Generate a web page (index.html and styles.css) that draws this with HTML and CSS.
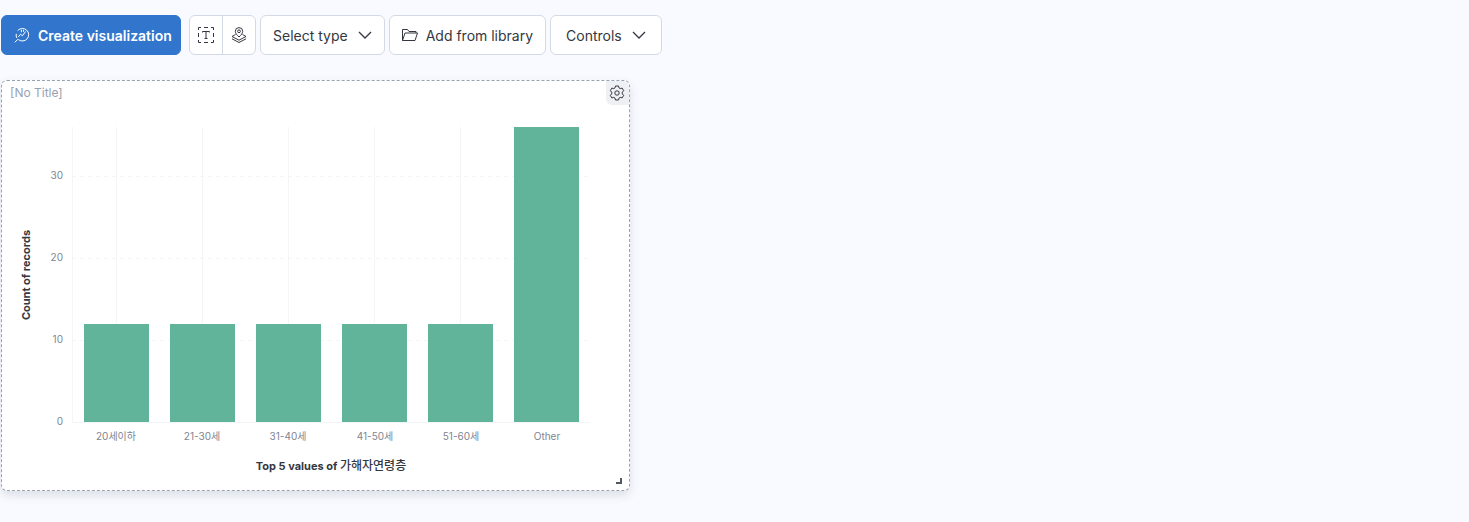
FILE: index.html
```html
<!DOCTYPE html>
<html lang="en">
<head>
  <meta charset="UTF-8" />
  <title>Dashboard editor</title>
  <link rel="stylesheet" href="styles.css">
</head>
<body>
<div class="toolbar">
  <button class="btn btn-primary">
    <svg class="icon" viewBox="0 0 16 16" fill="none" stroke="currentColor" stroke-width="1" stroke-linecap="round" stroke-linejoin="round">
      <path d="M4 3.2A6.3 6.3 0 1 1 4.6 12.8"/>
      <path d="M1 15l2.6-2.4"/>
      <path d="M2.2 7.2A5 5 0 0 0 2.6 10.6"/>
      <path d="M4.6 9.6l2-2.4 1.8 1.6 3-4"/>
      <path d="M7.4 3.2v1.6M9.6 3.2v1.2"/>
    </svg>
    Create visualization
  </button>
  <div class="btn-group">
    <button class="btn-square">
      <svg class="icon" viewBox="0 0 16 16" fill="none" stroke="currentColor" stroke-width="1">
        <path d="M.5 3V.5H3M6 .5h4M13 .5h2.500V3M15.500 6v4M15.500 13v2.500H13M10 15.500H6M3 15.500H.5V13M.5 10V6"/>
        <path d="M4.500 5.500V4.500h7v1M8 4.500v7M6.500 11.500h3"/>
      </svg>
    </button>
    <button class="btn-square">
      <svg class="icon" viewBox="0 0 16 16" fill="none" stroke="currentColor" stroke-width="1" stroke-linejoin="round">
        <path d="M8 10C6 8 4.300 6.400 4.300 4.300a3.700 3.700 0 0 1 7.400 0C11.700 6.400 10 8 8 10z"/>
        <circle cx="8" cy="4.300" r="1.400"/>
        <path d="M4.500 7.500L1 9.500l7 3.700 7-3.700-3.500-2"/>
        <path d="M1 11.800l7 3.700 7-3.700"/>
      </svg>
    </button>
  </div>
  <button class="btn">
    Select type
    <svg class="chevron" viewBox="0 0 14 8" fill="none" stroke="currentColor" stroke-width="1.300"><path d="M1 1l6 6 6-6"/></svg>
  </button>
  <button class="btn">
    <svg class="icon" viewBox="0 0 16 16" fill="none" stroke="currentColor" stroke-width="1" stroke-linejoin="round">
      <path d="M.5 13.500V2.500h5l1.500 2h7v1.500"/>
      <path d="M.5 13.500h12.500l2.500-7.500H3z"/>
    </svg>
    Add from library
  </button>
  <button class="btn btn-controls">
    Controls
    <svg class="chevron" viewBox="0 0 14 8" fill="none" stroke="currentColor" stroke-width="1.300"><path d="M1 1l6 6 6-6"/></svg>
  </button>
</div>

<div class="panel">
  <div class="panel-title">[No Title]</div>
  <div class="panel-gear">
    <svg viewBox="0 0 16 16" fill="none" stroke="currentColor" stroke-width="1" stroke-linejoin="round">
      <path d="M6.500 1h3l.5 1.900 1.300.7 1.900-.5 1.500 2.600-1.400 1.400v1.800l1.400 1.400-1.500 2.600-1.900-.5-1.300.7-.5 1.900h-3L6 13.100l-1.300-.7-1.900.5-1.500-2.600 1.400-1.400V7.100L1.300 5.700l1.500-2.600 1.900.5L6 2.900z"/>
      <circle cx="8" cy="8" r="2.200"/>
    </svg>
  </div>
  <svg class="chart" viewBox="2 105 627 384">
    <g class="grid">
      <path d="M72.500 127V422M116.500 127V422M202.500 127V422M288.500 127V422M374.500 127V422M460.500 127V422"/>
      <path class="grid-dash" d="M72 176.500H590M72 258.500H590M72 340.500H590"/>
      <path d="M72 422.500H590"/>
    </g>
    <g class="bars">
      <rect x="84" y="324" width="65" height="98"/>
      <rect x="170" y="324" width="65" height="98"/>
      <rect x="256" y="324" width="65" height="98"/>
      <rect x="342" y="324" width="65" height="98"/>
      <rect x="428" y="324" width="65" height="98"/>
      <rect x="514" y="127" width="65" height="295"/>
    </g>
    <g class="tick tick-y">
      <text x="63" y="425">0</text>
      <text x="63" y="343">10</text>
      <text x="63" y="261">20</text>
      <text x="63" y="179">30</text>
    </g>
    <g class="tick tick-x">
      <text x="116" y="440">20세이하</text>
      <text x="202" y="440">21-30세</text>
      <text x="288" y="440">31-40세</text>
      <text x="375" y="440">41-50세</text>
      <text x="461" y="440">51-60세</text>
      <text x="547" y="440">Other</text>
    </g>
    <text class="axis-title" x="331" y="470">Top 5 values of <tspan class="axis-field">가해자연령층</tspan></text>
    <text class="axis-title" transform="translate(30 275) rotate(-90)">Count of records</text>
  </svg>
  <div class="resize-handle"></div>
</div>
</body>
</html>
```

FILE: styles.css
```css
* { box-sizing: border-box; }
html, body { height: 100%; }
body {
  margin: 0;
  padding: 15px 0 0 1px;
  font-family: Inter, "Noto Sans CJK KR", sans-serif;
  background: #f9faff;
  color: #343741;
  overflow: hidden;
}
.toolbar {
  display: flex;
  gap: 4px;
  height: 40px;
}
.btn, .btn-square {
  font-family: inherit;
  font-size: 14px;
  color: #343741;
  background: #fff;
  cursor: pointer;
}
.btn {
  display: flex;
  align-items: center;
  gap: 8px;
  padding: 0 12px;
  border: 1px solid #d3dae6;
  border-radius: 6px;
  white-space: nowrap;
}
.btn-primary {
  width: 180px;
  margin-right: 4px;
  padding: 0 0 0 12px;
  background: #3176cc;
  border-color: #3176cc;
  color: #fff;
  font-weight: 600;
}
.btn-controls { padding: 0 15px; }
.btn-group {
  display: flex;
  width: 67px;
  background: #fff;
  border: 1px solid #d3dae6;
  border-radius: 6px;
}
.btn-square {
  flex: 1;
  display: flex;
  align-items: center;
  justify-content: center;
  padding: 0;
  border: none;
  background: transparent;
}
.btn-square + .btn-square { border-left: 1px solid #d3dae6; }
.icon { width: 16px; height: 16px; flex: none; }
.chevron { width: 14px; height: 8px; flex: none; margin-left: 2px; }

.panel {
  position: relative;
  width: 629px;
  height: 411px;
  margin-top: 25px;
  background: #fff;
  border: 1px dashed #98a2b3;
  border-radius: 6px;
  box-shadow: 0 4px 10px rgba(65,78,101,0.16);
}
.panel-title {
  height: 24px;
  padding: 5px 0 0 8px;
  font-size: 12px;
  line-height: 14px;
  color: #98a2b3;
}
.panel-gear {
  position: absolute;
  top: 0;
  right: 0;
  width: 23px;
  height: 24px;
  padding: 4px 3px;
  background: #eef0f3;
  border-radius: 0 6px 0 6px;
}
.panel-gear svg { display: block; width: 16px; height: 16px; }
.chart { display: block; width: 627px; height: 384px; }
.grid path { stroke: #f3f5f7; stroke-width: 1; fill: none; }
.grid .grid-dash { stroke-dasharray: 4 4; }
.bars rect { fill: #61b499; }
.tick text { font-size: 10px; fill: #7f8591; }
.tick-y text { text-anchor: end; }
.tick-x text { text-anchor: middle; }
.axis-title {
  font-size: 11px;
  font-weight: 700;
  fill: #343741;
  text-anchor: middle;
}
.axis-field { font-weight: 500; font-size: 12px; }
.resize-handle {
  position: absolute;
  right: 7px;
  bottom: 6px;
  width: 6px;
  height: 6px;
  border-right: 2px solid #535966;
  border-bottom: 2px solid #535966;
}
```
